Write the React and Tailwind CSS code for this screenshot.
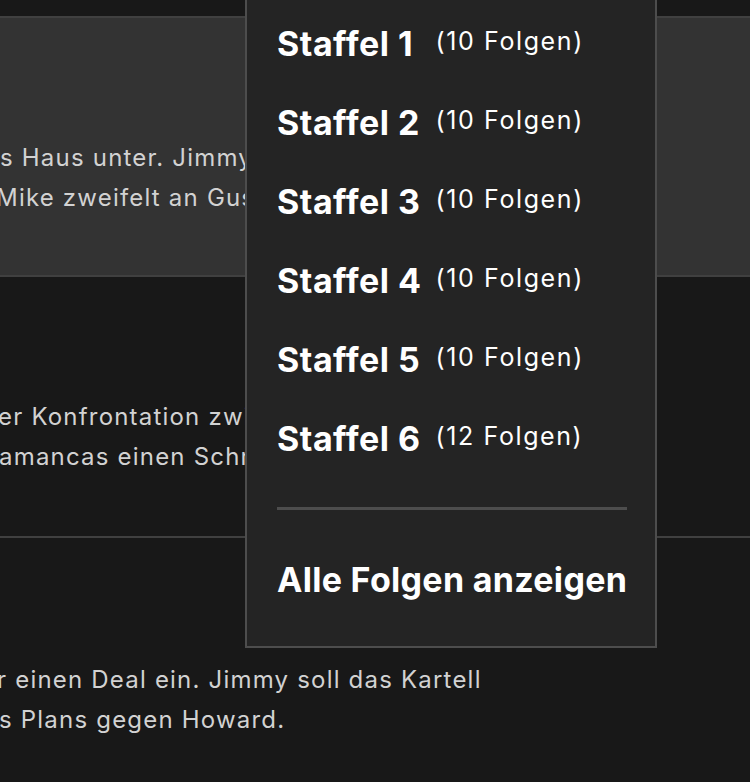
export default function App() {
  const seasons = [
    ["Staffel 1", "(10 Folgen)"],
    ["Staffel 2", "(10 Folgen)"],
    ["Staffel 3", "(10 Folgen)"],
    ["Staffel 4", "(10 Folgen)"],
    ["Staffel 5", "(10 Folgen)"],
    ["Staffel 6", "(12 Folgen)"],
  ];
  const line = "text-[24px] leading-[40px] tracking-[1.2px] text-[#d2d2d2] whitespace-nowrap";
  return (
    <div
      className="relative w-[750px] h-[782px] overflow-hidden bg-[#181818]"
      style={{ fontFamily: "Inter, 'Noto Sans', sans-serif" }}
    >
      <div className="flex flex-col pt-[16px]">
        <div className="h-[2px] bg-[#404040]" />
        {/* Episode 1 (current) */}
        <div className="h-[259px] bg-[#333333] border-b-2 border-[#404040] pt-[120px]">
          <p className={line}>s Haus unter. Jimmy und Kim setzen ihren Plan fort.</p>
          <p className={`${line} ml-[-4px]`}>Mike zweifelt an Gus' Absichten.</p>
        </div>
        {/* Episode 2 */}
        <div className="h-[261px] border-b-2 border-[#404040] pt-[120px]">
          <p className={`${line} ml-[-2px]`}>er Konfrontation zwischen Gus und den</p>
          <p className={`${line} ml-[-1px]`}>amancas einen Schritt voraus zu sein.</p>
        </div>
        {/* Episode 3 */}
        <div className="pt-[122px]">
          <p className={`${line} ml-[-3px]`}>r einen Deal ein. Jimmy soll das Kartell</p>
          <p className={`${line} ml-[-1px]`}>s Plans gegen Howard.</p>
        </div>
      </div>

      {/* Season dropdown */}
      <div className="absolute left-[245px] top-[-20px] w-[412px] h-[668px] bg-[#242424] border-2 border-[#4d4d4d] pl-[30px] pr-[28px] pt-[22px]">
        <div className="grid grid-cols-[auto_1fr] gap-x-[14px]">
          {seasons.map(([s, c]) => (
            <div key={s} className="contents">
              <div className="h-[79px] flex items-center text-[34px] tracking-[0.5px] font-bold text-white whitespace-nowrap">{s}</div>
              <div className="h-[79px] flex items-center text-[25px] tracking-[1.6px] text-white whitespace-nowrap pb-[3px]">{c}</div>
            </div>
          ))}
        </div>
        <div className="mt-[29px] h-[3px] bg-[#4d4d4d]" />
        <div className="mt-[50px] text-[34px] tracking-[0.3px] font-bold text-white whitespace-nowrap leading-[40px]">Alle Folgen anzeigen</div>
      </div>
    </div>
  );
}
